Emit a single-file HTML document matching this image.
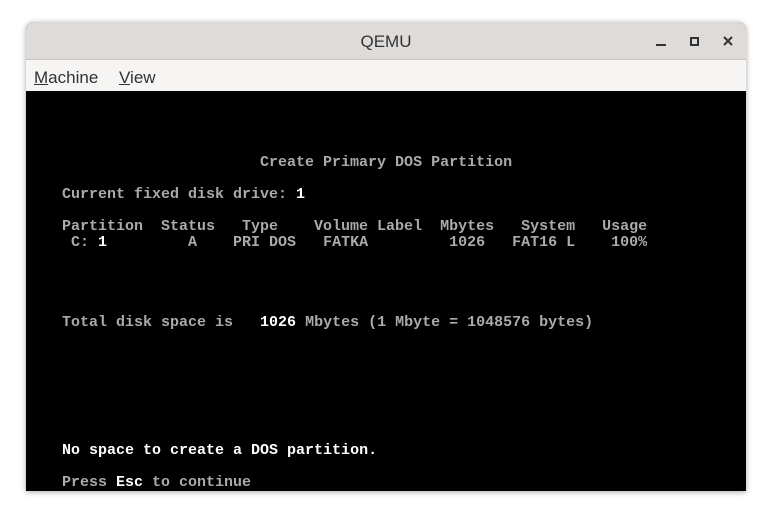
<!DOCTYPE html>
<html><head><style>
body{margin:0;width:772px;height:520px;background:#fff;position:relative;overflow:hidden;font-family:"Liberation Sans",sans-serif}
.win{position:absolute;left:26px;top:22px;width:720px;height:469px;border-radius:8px 8px 0 0;box-shadow:0 1px 6px rgba(0,0,0,.35);overflow:hidden;background:#000}
.tb{position:absolute;left:0;top:0;width:720px;height:37px;background:#dedbd8;border-bottom:1px solid #c8c4c0}
.tb .t{position:absolute;left:0;width:720px;text-align:center;top:10px;font-size:17px;color:#2e3436}
.mn{position:absolute;left:0;top:38px;width:720px;height:31px;background:#f6f5f4;font-size:17px;color:#2e3436}
.mn span{position:absolute;top:8px}
.scr{position:absolute;left:0;top:69px;width:720px;height:400px;background:#000}
pre{margin:0;font-family:"Liberation Mono",monospace;font-size:15px;line-height:16px;color:#aaa;font-weight:bold}
b{color:#fff}
</style></head><body>
<div class="win">
<div class="tb"><div class="t">QEMU</div>
<div style="position:absolute;left:630px;top:22px;width:10px;height:2px;background:#2e3436"></div>
<div style="position:absolute;left:664px;top:15px;width:5px;height:5px;border:2px solid #2e3436"></div>
<svg style="position:absolute;left:697px;top:14px" width="10" height="10"><path d="M1 1L9 9M9 1L1 9" stroke="#2e3436" stroke-width="2"/></svg>
</div>
<div class="mn"><span style="left:8px"><u>M</u>achine</span><span style="left:93px"><u>V</u>iew</span></div>
<div class="scr"><pre>




                          Create Primary DOS Partition

    Current fixed disk drive: <b>1</b>

    Partition  Status   Type    Volume Label  Mbytes   System   Usage
     C: <b>1</b>         A    PRI DOS   FATKA         1026   FAT16 L    100%




    Total disk space is   <b>1026</b> Mbytes (1 Mbyte = 1048576 bytes)







    <b>No space to create a DOS partition.</b>

    Press <b>Esc</b> to continue</pre></div>
</div>
</body></html>
